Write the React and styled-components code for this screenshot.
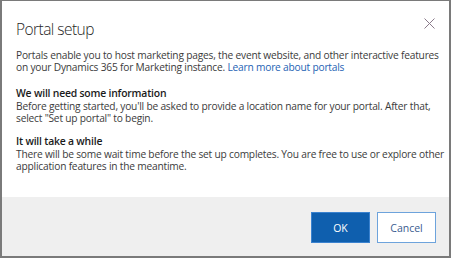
import React from "react";
import styled, { createGlobalStyle } from "styled-components";

const Global = createGlobalStyle`
  html, body { margin: 0; padding: 0; background: #ffffff; }
  body { font-family: "Open Sans", "Noto Sans", sans-serif; }
  * { box-sizing: border-box; }
`;

const Dialog = styled.div`
  width: 451px;
  height: 258px;
  border: 2px solid #7a7a7a;
  border-top-width: 1px;
  background: #ffffff;
  display: flex;
  flex-direction: column;
`;

const Body = styled.div`
  flex: 1;
  padding: 0 8px 0 14px;
  position: relative;
`;

const Title = styled.h1`
  margin: 0;
  padding-top: 17px;
  font-size: 15.5px;
  font-weight: 300;
  color: #262626;
  line-height: 22px;
  letter-spacing: -0.55px;
`;

const Close = styled.button`
  position: absolute;
  top: 14px;
  right: 12px;
  width: 16px;
  height: 16px;
  padding: 0;
  border: none;
  background: transparent;
  display: flex;
  align-items: center;
  justify-content: center;
`;

const Para = styled.p`
  margin: ${(p) => p.$top}px 0 0 0;
  font-size: 10.2px;
  line-height: 11.5px;
  letter-spacing: -0.2px;
  white-space: nowrap;
  color: #3b3b3b;
`;

const Heading = styled.h2`
  margin: ${(p) => p.$top}px 0 0 0;
  font-size: 10.4px;
  line-height: 12px;
  font-weight: 600;
  letter-spacing: -0.2px;
  color: #1a1a1a;
`;

const Link = styled.a`
  color: #1e62b4;
  text-decoration: none;
`;

const Footer = styled.div`
  height: 59px;
  background: #efefef;
  display: flex;
  justify-content: flex-end;
  align-items: flex-start;
  gap: 7px;
  padding: 15px 13px 0 0;
`;

const Button = styled.button`
  width: 59px;
  height: 31px;
  font-family: "Open Sans", "Noto Sans", sans-serif;
  font-size: 10.5px;
  border: 1px solid ${(p) => (p.$primary ? "#3a82cf" : "#6da3dc")};
  background: ${(p) => (p.$primary ? "#0f5fae" : "#ffffff")};
  color: ${(p) => (p.$primary ? "#ffffff" : "#3a5c8f")};
  padding: 0;
`;

export default function App() {
  return (
    <>
      <Global />
      <Dialog>
        <Body>
          <Title>Portal setup</Title>
          <Close aria-label="Close">
            <svg width="11" height="11" viewBox="0 0 11 11">
              <path d="M0.5 0.5 L10.5 10.5 M10.5 0.5 L0.5 10.5" stroke="#8a7a8a" strokeWidth="1" fill="none" />
            </svg>
          </Close>
          <Para $top={10}>
            Portals enable you to host marketing pages, the event website, and other interactive features
            <br />
            on your Dynamics 365 for Marketing instance. <Link href="#">Learn more about portals</Link>
          </Para>
          <Heading $top={14}>We will need some information</Heading>
          <Para $top={2}>
            Before getting started, you'll be asked to provide a location name for your portal. After that,
            <br />
            select "Set up portal" to begin.
          </Para>
          <Heading $top={11}>It will take a while</Heading>
          <Para $top={2}>
            There will be some wait time before the set up completes. You are free to use or explore other
            <br />
            application features in the meantime.
          </Para>
        </Body>
        <Footer>
          <Button $primary>OK</Button>
          <Button>Cancel</Button>
        </Footer>
      </Dialog>
    </>
  );
}
